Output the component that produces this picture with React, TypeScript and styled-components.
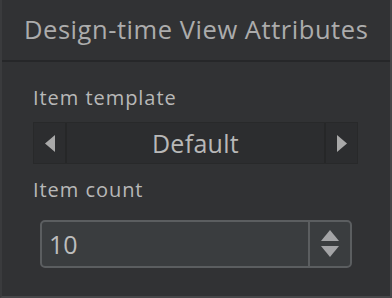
import React from 'react';
import styled, {createGlobalStyle} from "styled-components";

const GlobalStyle = createGlobalStyle`
    html, body {
        margin: 0;
        padding: 0;
        background: #313234;
    }
`

const Panel = styled.div`
    box-sizing: border-box;
    width: 392px;
    height: 298px;
    background: #313234;
    border-left: 2px solid #3a3b3d;
    border-right: 2px solid #464749;
    border-bottom: 2px solid #464749;
    font-family: "Open Sans", "Liberation Sans", sans-serif;
    color: #b4b4b4;
    display: flex;
    flex-direction: column;
`

const Header = styled.div`
    height: 62px;
    box-sizing: border-box;
    padding-bottom: 3px;
    border-bottom: 2px solid #262729;
    display: flex;
    align-items: center;
    padding-left: 22px;
    font-size: 25.5px;
    letter-spacing: 0.55px;
    color: #acacac;
`

const Body = styled.div`
    display: flex;
    flex-direction: column;
    padding: 24px 0 0 31px;
`

const Label = styled.div`
    font-size: 20px;
    letter-spacing: 0.95px;
    color: #b8b8b8;
    height: 24px;
    line-height: 24px;
`

const Combo = styled.div`
    margin-top: 12px;
    width: 325px;
    height: 42px;
    box-sizing: border-box;
    background: #2c2d2f;
    border: 1px solid #28292a;
    display: flex;
    margin-bottom: 14px;
`

const ComboButton = styled.div<{ $side: "left" | "right" }>`
    width: 31px;
    display: flex;
    align-items: center;
    justify-content: center;
    ${p => p.$side === "left" ? "border-right: 2px solid #262728;" : "border-left: 2px solid #262728;"}
`

const ComboValue = styled.div`
    flex: 1;
    display: flex;
    align-items: center;
    justify-content: center;
    font-size: 25px;
    letter-spacing: 0.3px;
    color: #b8b8b8;
`

const Spinner = styled.div`
    margin-top: 18px;
    margin-left: 7px;
    width: 312px;
    height: 48px;
    box-sizing: border-box;
    background: #3a3d3f;
    border: 2px solid #5b5e60;
    border-radius: 5px;
    display: flex;
`

const SpinnerValue = styled.div`
    flex: 1;
    display: flex;
    align-items: center;
    padding-left: 7px;
    font-size: 25px;
    color: #bdbdbd;
`

const SpinnerButtons = styled.div`
    width: 40px;
    border-left: 2px solid #5b5e60;
    display: flex;
    align-items: center;
    justify-content: center;
`

function Arrow({dir}: { dir: "left" | "right" }) {
    return (
        <svg width="10" height="17" viewBox="0 0 10 17">
            {dir === "left"
                ? <polygon points="10,0 10,17 0,8.5" fill="#a9a9a9"/>
                : <polygon points="0,0 0,17 10,8.5" fill="#a9a9a9"/>}
        </svg>
    )
}

function App() {
    return (
        <>
            <GlobalStyle/>
            <Panel>
                <Header>Design-time View Attributes</Header>
                <Body>
                    <Label>Item template</Label>
                    <Combo>
                        <ComboButton $side="left"><Arrow dir="left"/></ComboButton>
                        <ComboValue>Default</ComboValue>
                        <ComboButton $side="right"><Arrow dir="right"/></ComboButton>
                    </Combo>
                    <Label>Item count</Label>
                    <Spinner>
                        <SpinnerValue>10</SpinnerValue>
                        <SpinnerButtons>
                            <svg width="20" height="28" viewBox="0 0 20 28">
                                <polygon points="10,0 19,11 1,11" fill="#a3a4a6"/>
                                <polygon points="1,16 19,16 10,27" fill="#a3a4a6"/>
                            </svg>
                        </SpinnerButtons>
                    </Spinner>
                </Body>
            </Panel>
        </>
    );
}

export default App;
